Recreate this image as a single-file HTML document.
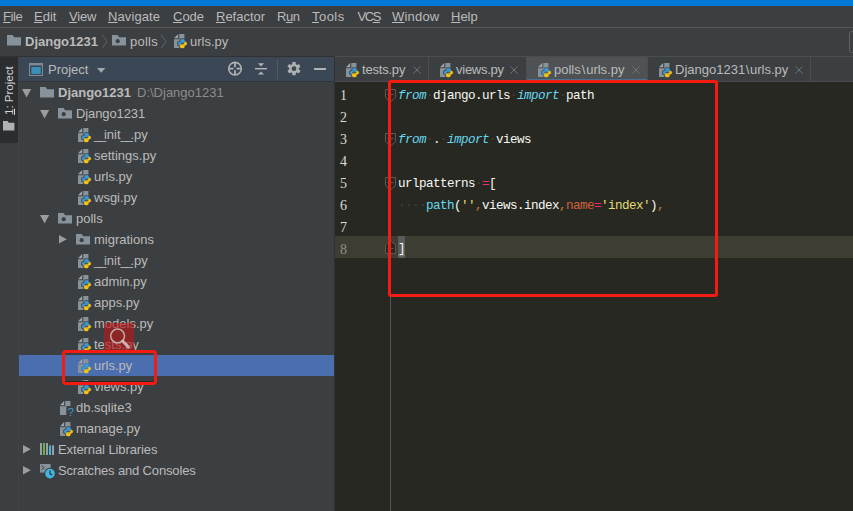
<!DOCTYPE html>
<html>
<head>
<meta charset="utf-8">
<title>PyCharm</title>
<style>
html,body{margin:0;padding:0;}
body{width:853px;height:511px;overflow:hidden;background:#3c3f41;position:relative;
  font-family:"Liberation Sans",sans-serif;font-size:13px;color:#bbbbbb;}
.abs{position:absolute;}
svg{display:block;overflow:visible;}
#titlebar{left:0;top:0;width:853px;height:6px;background:#0078d7;}
#menubar{left:0;top:6px;width:853px;height:21px;background:#3c3f41;}
#menuline{left:0;top:27px;width:853px;height:1px;background:#555758;}
.mi{position:absolute;top:9px;height:16px;line-height:16px;font-size:13px;color:#bbbbbb;white-space:nowrap;}
.mi u{text-decoration:underline;text-underline-offset:1px;}
#navbar{left:0;top:28px;width:853px;height:28px;background:#3c3f41;}
#navline{left:0;top:56px;width:335px;height:1px;background:#2f3133;}
#navline2{left:335px;top:56px;width:518px;height:1px;background:#4b4d4e;}
.nv{position:absolute;top:33px;height:18px;line-height:18px;font-size:13px;white-space:nowrap;color:#bbbbbb;}
#strip{left:0;top:57px;width:18px;height:454px;background:#3c3f41;}
#striptab{left:0;top:57px;width:18px;height:86px;background:#2b2d2e;}
#stripline{left:18px;top:57px;width:1px;height:454px;background:#404345;}
#striptx{left:9px;top:115px;transform-origin:0 0;transform:rotate(-90deg) translateY(-50%);font-size:11.5px;color:#d4d4d4;white-space:nowrap;line-height:14px;height:14px;}
#phead{left:19px;top:57px;width:315px;height:24px;background:#3b4754;}
#tree{left:19px;top:81px;width:315px;height:430px;background:#3c3f41;}
.tx{position:absolute;height:21px;line-height:21px;font-size:13px;white-space:nowrap;color:#bbbbbb;}
#sel{left:19px;top:355px;width:315px;height:21px;background:#4b6eaf;}
#psplit{left:334px;top:57px;width:1px;height:454px;background:#2f3133;}
#tabbar{left:335px;top:57px;width:518px;height:25px;background:#3c3f41;}
#tabline{left:335px;top:81px;width:518px;height:1px;background:#4a4c4c;}
#pheadline{left:19px;top:81px;width:315px;height:1px;background:#333638;}
#acttab{left:527px;top:57px;width:120px;height:24px;background:#4e5254;}
#actline{left:527px;top:79px;width:120px;height:2px;background:#4a88c7;opacity:.55;}
.tsep{position:absolute;top:57px;width:1px;height:24px;background:#4b4d4e;}
.tabtx{position:absolute;top:61px;height:18px;line-height:18px;font-size:13px;white-space:nowrap;color:#bbbbbb;}
#editor{left:335px;top:82px;width:518px;height:429px;background:#272822;}
#curline{left:335px;top:236px;width:518px;height:22px;background:#3e3d32;}
#gutline{left:390px;top:82px;width:1px;height:429px;background:#55564f;}
.ln{position:absolute;left:340px;width:20px;height:22px;line-height:22px;font-family:"Liberation Serif","Noto Serif CJK SC",serif;font-size:14px;color:#dcdcd6;}
.code{position:absolute;left:398px;height:22px;line-height:22px;font-family:"Liberation Mono",monospace;font-size:12.6px;letter-spacing:-0.56px;color:#f8f8f2;white-space:pre;}
.kw{color:#66d9ef;font-style:italic;}
.fn{color:#66d9ef;}
.op{color:#f92672;}
.st{color:#e6db74;}
.cm{color:#cc7832;}
.pa{color:#d4603d;}
.redbox{position:absolute;border:3px solid #f41b12;box-sizing:border-box;}
</style>
</head>
<body>
<div class="abs" id="titlebar"></div>
<div class="abs" id="menubar"></div>
<div class="abs" id="menuline"></div>
<span class="mi" style="left:3px;letter-spacing:-0.4px"><u>F</u>ile</span>
<span class="mi" style="left:34px;letter-spacing:0px"><u>E</u>dit</span>
<span class="mi" style="left:69px;letter-spacing:-0.2px"><u>V</u>iew</span>
<span class="mi" style="left:108px;letter-spacing:0.1px"><u>N</u>avigate</span>
<span class="mi" style="left:173px;letter-spacing:0px"><u>C</u>ode</span>
<span class="mi" style="left:216px;letter-spacing:0px"><u>R</u>efactor</span>
<span class="mi" style="left:277px;letter-spacing:-0.5px">R<u>u</u>n</span>
<span class="mi" style="left:312px;letter-spacing:0.45px"><u>T</u>ools</span>
<span class="mi" style="left:357.5px;letter-spacing:-1.4px">VC<u>S</u></span>
<span class="mi" style="left:392px;letter-spacing:0.2px"><u>W</u>indow</span>
<span class="mi" style="left:451px;letter-spacing:0px"><u>H</u>elp</span>
<div class="abs" id="navbar"></div>
<div class="abs" id="navline"></div><div class="abs" id="navline2"></div>
<svg class="abs" style="left:7px;top:35.3px" width="14" height="11" viewBox="0 0 14 11" ><path d="M0 0H5.6L7.2 2.2H14V10.6H0Z" fill="#87929a"/></svg><span class="nv" style="left:25px;font-weight:bold">Django1231</span>
<svg class="abs" style="left:101px;top:34px" width="7" height="15" viewBox="0 0 7 15" ><path d="M1 .5L6 7.5L1 14.5" stroke="#5f6365" stroke-width="1" fill="none"/></svg><svg class="abs" style="left:112px;top:35.3px" width="14" height="11" viewBox="0 0 14 11" ><path d="M0 0H5.6L7.2 2.2H14V10.6H0Z" fill="#87929a"/><circle cx="5.7" cy="6.2" r="2.1" fill="#3c3f41"/></svg><span class="nv" style="left:130px;letter-spacing:.25px">polls</span>
<svg class="abs" style="left:160px;top:34px" width="7" height="15" viewBox="0 0 7 15" ><path d="M1 .5L6 7.5L1 14.5" stroke="#5f6365" stroke-width="1" fill="none"/></svg><svg class="abs" style="left:174px;top:33.6px" width="15" height="16" viewBox="0 0 15 16" ><path d="M4.2 0L0 4.2H4.2Z" fill="#9ba6ad"/><path d="M5.3 0H10.4V14H0V5.3H5.3Z" fill="#87929a"/><g transform="translate(4.0 5.2) scale(0.88)"><path d="M5 0C3.5 0 2.7.6 2.7 1.5V2.7H5.1V3.1H1.6C.6 3.1 0 4 0 5C0 6 .6 6.9 1.6 6.9H2.5V5.7C2.5 4.8 3.2 4.1 4.1 4.1H6.4C7.1 4.1 7.6 3.6 7.6 2.9V1.5C7.6.6 6.6 0 5 0Z" fill="#3c3f41" stroke="#3c3f41" stroke-width="2.2"/><path d="M5 0C3.5 0 2.7.6 2.7 1.5V2.7H5.1V3.1H1.6C.6 3.1 0 4 0 5C0 6 .6 6.9 1.6 6.9H2.5V5.7C2.5 4.8 3.2 4.1 4.1 4.1H6.4C7.1 4.1 7.6 3.6 7.6 2.9V1.5C7.6.6 6.6 0 5 0Z" transform="rotate(180 5 5)" fill="#3c3f41" stroke="#3c3f41" stroke-width="2.2"/><path d="M5 0C3.5 0 2.7.6 2.7 1.5V2.7H5.1V3.1H1.6C.6 3.1 0 4 0 5C0 6 .6 6.9 1.6 6.9H2.5V5.7C2.5 4.8 3.2 4.1 4.1 4.1H6.4C7.1 4.1 7.6 3.6 7.6 2.9V1.5C7.6.6 6.6 0 5 0Z" fill="#3e9bd6" stroke="#3e9bd6" stroke-width=".5"/><path d="M5 0C3.5 0 2.7.6 2.7 1.5V2.7H5.1V3.1H1.6C.6 3.1 0 4 0 5C0 6 .6 6.9 1.6 6.9H2.5V5.7C2.5 4.8 3.2 4.1 4.1 4.1H6.4C7.1 4.1 7.6 3.6 7.6 2.9V1.5C7.6.6 6.6 0 5 0Z" transform="rotate(180 5 5)" fill="#f5c518" stroke="#f5c518" stroke-width=".5"/></g></svg><span class="nv" style="left:190px">urls.py</span>
<div class="abs" style="left:849px;top:31px;width:8px;height:20px;border:1px solid #5e6162;border-radius:3px;"></div>
<div class="abs" id="strip"></div>
<div class="abs" id="striptab"></div>
<div class="abs" id="stripline"></div>
<div class="abs" id="striptx"><u>1</u>: Project</div>
<svg class="abs" style="left:3px;top:120.5px" width="12" height="10" viewBox="0 0 12 10" ><path d="M0 0H4.6L5.8 1.8H11.4V9.4H0Z" fill="#afb1b3"/></svg><div class="abs" id="phead"></div>
<svg class="abs" style="left:29px;top:63px" width="14" height="13" viewBox="0 0 14 13" ><rect x=".5" y=".5" width="13" height="12" fill="none" stroke="#7f8b94" stroke-width="1"/><rect x="0" y="0" width="14" height="2.4" fill="#7f8b94"/><rect x="2.4" y="4" width="9.4" height="7" fill="#3a8fb7"/></svg><span class="tx" style="left:48px;top:59px">Project</span>
<svg class="abs" style="left:97px;top:68px" width="9" height="5" viewBox="0 0 9 5" ><path d="M0 0H8.4L4.2 4.8Z" fill="#a4a7aa"/></svg><svg class="abs" style="left:227px;top:61px" width="16" height="16" viewBox="0 0 16 16" ><circle cx="8" cy="7.7" r="6.3" fill="none" stroke="#afb1b3" stroke-width="1.6"/><path d="M8 1.4V6.2M8 9.2V14M1.7 7.7H6.5M9.5 7.7H14.3" stroke="#afb1b3" stroke-width="1.8"/></svg><svg class="abs" style="left:254px;top:62px" width="14" height="14" viewBox="0 0 14 14" ><path d="M1 6.7H13" stroke="#afb1b3" stroke-width="1.5"/><path d="M3.8 1.2H10.2L7 4.4Z" fill="#afb1b3"/><path d="M3.8 12.6H10.2L7 9.4Z" fill="#afb1b3"/></svg><div class="abs" style="left:277px;top:59px;width:1px;height:20px;background:#5b5855;"></div>
<svg class="abs" style="left:286px;top:61px" width="16" height="16" viewBox="0 0 16 16" ><g transform="translate(8 7.7)"><rect x="-1.7" y="-6.6" width="3.4" height="3.4" rx=".5" fill="#afb1b3" transform="rotate(0)"/><rect x="-1.7" y="-6.6" width="3.4" height="3.4" rx=".5" fill="#afb1b3" transform="rotate(60)"/><rect x="-1.7" y="-6.6" width="3.4" height="3.4" rx=".5" fill="#afb1b3" transform="rotate(120)"/><rect x="-1.7" y="-6.6" width="3.4" height="3.4" rx=".5" fill="#afb1b3" transform="rotate(180)"/><rect x="-1.7" y="-6.6" width="3.4" height="3.4" rx=".5" fill="#afb1b3" transform="rotate(240)"/><rect x="-1.7" y="-6.6" width="3.4" height="3.4" rx=".5" fill="#afb1b3" transform="rotate(300)"/><circle r="3.6" fill="none" stroke="#afb1b3" stroke-width="2.4"/></g></svg><div class="abs" style="left:314px;top:68px;width:12px;height:2px;background:#afb1b3;"></div>
<div class="abs" id="tree"></div>
<div class="abs" id="pheadline"></div>
<div class="abs" id="sel"></div>
<svg class="abs" style="left:22px;top:89px" width="10" height="9" viewBox="0 0 10 9" ><path d="M0 0H9.2L4.6 8.4Z" fill="#9c9c9c"/></svg><svg class="abs" style="left:40px;top:87.2px" width="14" height="11" viewBox="0 0 14 11" ><path d="M0 0H5.6L7.2 2.2H14V10.6H0Z" fill="#87929a"/></svg><span class="tx" style="left:58px;top:82px;font-weight:bold">Django1231</span>
<span class="tx" style="left:137px;top:82px;color:#8a8d8f">D:\Django1231</span>
<svg class="abs" style="left:40px;top:110px" width="10" height="9" viewBox="0 0 10 9" ><path d="M0 0H9.2L4.6 8.4Z" fill="#9c9c9c"/></svg><svg class="abs" style="left:58px;top:108.2px" width="14" height="11" viewBox="0 0 14 11" ><path d="M0 0H5.6L7.2 2.2H14V10.6H0Z" fill="#87929a"/><circle cx="5.7" cy="6.2" r="2.1" fill="#3c3f41"/></svg><span class="tx" style="left:76px;top:103px"><span style="letter-spacing:-.1px">Django1231</span></span>
<svg class="abs" style="left:78px;top:128px" width="15" height="16" viewBox="0 0 15 16" ><path d="M4.2 0L0 4.2H4.2Z" fill="#9ba6ad"/><path d="M5.3 0H10.4V14H0V5.3H5.3Z" fill="#87929a"/><g transform="translate(4.0 5.2) scale(0.88)"><path d="M5 0C3.5 0 2.7.6 2.7 1.5V2.7H5.1V3.1H1.6C.6 3.1 0 4 0 5C0 6 .6 6.9 1.6 6.9H2.5V5.7C2.5 4.8 3.2 4.1 4.1 4.1H6.4C7.1 4.1 7.6 3.6 7.6 2.9V1.5C7.6.6 6.6 0 5 0Z" fill="#3c3f41" stroke="#3c3f41" stroke-width="2.2"/><path d="M5 0C3.5 0 2.7.6 2.7 1.5V2.7H5.1V3.1H1.6C.6 3.1 0 4 0 5C0 6 .6 6.9 1.6 6.9H2.5V5.7C2.5 4.8 3.2 4.1 4.1 4.1H6.4C7.1 4.1 7.6 3.6 7.6 2.9V1.5C7.6.6 6.6 0 5 0Z" transform="rotate(180 5 5)" fill="#3c3f41" stroke="#3c3f41" stroke-width="2.2"/><path d="M5 0C3.5 0 2.7.6 2.7 1.5V2.7H5.1V3.1H1.6C.6 3.1 0 4 0 5C0 6 .6 6.9 1.6 6.9H2.5V5.7C2.5 4.8 3.2 4.1 4.1 4.1H6.4C7.1 4.1 7.6 3.6 7.6 2.9V1.5C7.6.6 6.6 0 5 0Z" fill="#3e9bd6" stroke="#3e9bd6" stroke-width=".5"/><path d="M5 0C3.5 0 2.7.6 2.7 1.5V2.7H5.1V3.1H1.6C.6 3.1 0 4 0 5C0 6 .6 6.9 1.6 6.9H2.5V5.7C2.5 4.8 3.2 4.1 4.1 4.1H6.4C7.1 4.1 7.6 3.6 7.6 2.9V1.5C7.6.6 6.6 0 5 0Z" transform="rotate(180 5 5)" fill="#f5c518" stroke="#f5c518" stroke-width=".5"/></g></svg><span class="tx" style="left:94px;top:124px"><span style="letter-spacing:-2.3px">__</span>init<span style="letter-spacing:-2.3px">__</span>.py</span>
<svg class="abs" style="left:78px;top:149px" width="15" height="16" viewBox="0 0 15 16" ><path d="M4.2 0L0 4.2H4.2Z" fill="#9ba6ad"/><path d="M5.3 0H10.4V14H0V5.3H5.3Z" fill="#87929a"/><g transform="translate(4.0 5.2) scale(0.88)"><path d="M5 0C3.5 0 2.7.6 2.7 1.5V2.7H5.1V3.1H1.6C.6 3.1 0 4 0 5C0 6 .6 6.9 1.6 6.9H2.5V5.7C2.5 4.8 3.2 4.1 4.1 4.1H6.4C7.1 4.1 7.6 3.6 7.6 2.9V1.5C7.6.6 6.6 0 5 0Z" fill="#3c3f41" stroke="#3c3f41" stroke-width="2.2"/><path d="M5 0C3.5 0 2.7.6 2.7 1.5V2.7H5.1V3.1H1.6C.6 3.1 0 4 0 5C0 6 .6 6.9 1.6 6.9H2.5V5.7C2.5 4.8 3.2 4.1 4.1 4.1H6.4C7.1 4.1 7.6 3.6 7.6 2.9V1.5C7.6.6 6.6 0 5 0Z" transform="rotate(180 5 5)" fill="#3c3f41" stroke="#3c3f41" stroke-width="2.2"/><path d="M5 0C3.5 0 2.7.6 2.7 1.5V2.7H5.1V3.1H1.6C.6 3.1 0 4 0 5C0 6 .6 6.9 1.6 6.9H2.5V5.7C2.5 4.8 3.2 4.1 4.1 4.1H6.4C7.1 4.1 7.6 3.6 7.6 2.9V1.5C7.6.6 6.6 0 5 0Z" fill="#3e9bd6" stroke="#3e9bd6" stroke-width=".5"/><path d="M5 0C3.5 0 2.7.6 2.7 1.5V2.7H5.1V3.1H1.6C.6 3.1 0 4 0 5C0 6 .6 6.9 1.6 6.9H2.5V5.7C2.5 4.8 3.2 4.1 4.1 4.1H6.4C7.1 4.1 7.6 3.6 7.6 2.9V1.5C7.6.6 6.6 0 5 0Z" transform="rotate(180 5 5)" fill="#f5c518" stroke="#f5c518" stroke-width=".5"/></g></svg><span class="tx" style="left:94px;top:145px">settings.py</span>
<svg class="abs" style="left:78px;top:170px" width="15" height="16" viewBox="0 0 15 16" ><path d="M4.2 0L0 4.2H4.2Z" fill="#9ba6ad"/><path d="M5.3 0H10.4V14H0V5.3H5.3Z" fill="#87929a"/><g transform="translate(4.0 5.2) scale(0.88)"><path d="M5 0C3.5 0 2.7.6 2.7 1.5V2.7H5.1V3.1H1.6C.6 3.1 0 4 0 5C0 6 .6 6.9 1.6 6.9H2.5V5.7C2.5 4.8 3.2 4.1 4.1 4.1H6.4C7.1 4.1 7.6 3.6 7.6 2.9V1.5C7.6.6 6.6 0 5 0Z" fill="#3c3f41" stroke="#3c3f41" stroke-width="2.2"/><path d="M5 0C3.5 0 2.7.6 2.7 1.5V2.7H5.1V3.1H1.6C.6 3.1 0 4 0 5C0 6 .6 6.9 1.6 6.9H2.5V5.7C2.5 4.8 3.2 4.1 4.1 4.1H6.4C7.1 4.1 7.6 3.6 7.6 2.9V1.5C7.6.6 6.6 0 5 0Z" transform="rotate(180 5 5)" fill="#3c3f41" stroke="#3c3f41" stroke-width="2.2"/><path d="M5 0C3.5 0 2.7.6 2.7 1.5V2.7H5.1V3.1H1.6C.6 3.1 0 4 0 5C0 6 .6 6.9 1.6 6.9H2.5V5.7C2.5 4.8 3.2 4.1 4.1 4.1H6.4C7.1 4.1 7.6 3.6 7.6 2.9V1.5C7.6.6 6.6 0 5 0Z" fill="#3e9bd6" stroke="#3e9bd6" stroke-width=".5"/><path d="M5 0C3.5 0 2.7.6 2.7 1.5V2.7H5.1V3.1H1.6C.6 3.1 0 4 0 5C0 6 .6 6.9 1.6 6.9H2.5V5.7C2.5 4.8 3.2 4.1 4.1 4.1H6.4C7.1 4.1 7.6 3.6 7.6 2.9V1.5C7.6.6 6.6 0 5 0Z" transform="rotate(180 5 5)" fill="#f5c518" stroke="#f5c518" stroke-width=".5"/></g></svg><span class="tx" style="left:94px;top:166px">urls.py</span>
<svg class="abs" style="left:78px;top:191px" width="15" height="16" viewBox="0 0 15 16" ><path d="M4.2 0L0 4.2H4.2Z" fill="#9ba6ad"/><path d="M5.3 0H10.4V14H0V5.3H5.3Z" fill="#87929a"/><g transform="translate(4.0 5.2) scale(0.88)"><path d="M5 0C3.5 0 2.7.6 2.7 1.5V2.7H5.1V3.1H1.6C.6 3.1 0 4 0 5C0 6 .6 6.9 1.6 6.9H2.5V5.7C2.5 4.8 3.2 4.1 4.1 4.1H6.4C7.1 4.1 7.6 3.6 7.6 2.9V1.5C7.6.6 6.6 0 5 0Z" fill="#3c3f41" stroke="#3c3f41" stroke-width="2.2"/><path d="M5 0C3.5 0 2.7.6 2.7 1.5V2.7H5.1V3.1H1.6C.6 3.1 0 4 0 5C0 6 .6 6.9 1.6 6.9H2.5V5.7C2.5 4.8 3.2 4.1 4.1 4.1H6.4C7.1 4.1 7.6 3.6 7.6 2.9V1.5C7.6.6 6.6 0 5 0Z" transform="rotate(180 5 5)" fill="#3c3f41" stroke="#3c3f41" stroke-width="2.2"/><path d="M5 0C3.5 0 2.7.6 2.7 1.5V2.7H5.1V3.1H1.6C.6 3.1 0 4 0 5C0 6 .6 6.9 1.6 6.9H2.5V5.7C2.5 4.8 3.2 4.1 4.1 4.1H6.4C7.1 4.1 7.6 3.6 7.6 2.9V1.5C7.6.6 6.6 0 5 0Z" fill="#3e9bd6" stroke="#3e9bd6" stroke-width=".5"/><path d="M5 0C3.5 0 2.7.6 2.7 1.5V2.7H5.1V3.1H1.6C.6 3.1 0 4 0 5C0 6 .6 6.9 1.6 6.9H2.5V5.7C2.5 4.8 3.2 4.1 4.1 4.1H6.4C7.1 4.1 7.6 3.6 7.6 2.9V1.5C7.6.6 6.6 0 5 0Z" transform="rotate(180 5 5)" fill="#f5c518" stroke="#f5c518" stroke-width=".5"/></g></svg><span class="tx" style="left:94px;top:187px">wsgi.py</span>
<svg class="abs" style="left:40px;top:215px" width="10" height="9" viewBox="0 0 10 9" ><path d="M0 0H9.2L4.6 8.4Z" fill="#9c9c9c"/></svg><svg class="abs" style="left:58px;top:213.2px" width="14" height="11" viewBox="0 0 14 11" ><path d="M0 0H5.6L7.2 2.2H14V10.6H0Z" fill="#87929a"/><circle cx="5.7" cy="6.2" r="2.1" fill="#3c3f41"/></svg><span class="tx" style="left:76px;top:208px">polls</span>
<svg class="abs" style="left:59px;top:235px" width="9" height="10" viewBox="0 0 9 10" ><path d="M0 0L7.8 4.3L0 8.6Z" fill="#9c9c9c"/></svg><svg class="abs" style="left:76px;top:234.2px" width="14" height="11" viewBox="0 0 14 11" ><path d="M0 0H5.6L7.2 2.2H14V10.6H0Z" fill="#87929a"/><circle cx="5.7" cy="6.2" r="2.1" fill="#3c3f41"/></svg><span class="tx" style="left:94px;top:229px">migrations</span>
<svg class="abs" style="left:78px;top:254px" width="15" height="16" viewBox="0 0 15 16" ><path d="M4.2 0L0 4.2H4.2Z" fill="#9ba6ad"/><path d="M5.3 0H10.4V14H0V5.3H5.3Z" fill="#87929a"/><g transform="translate(4.0 5.2) scale(0.88)"><path d="M5 0C3.5 0 2.7.6 2.7 1.5V2.7H5.1V3.1H1.6C.6 3.1 0 4 0 5C0 6 .6 6.9 1.6 6.9H2.5V5.7C2.5 4.8 3.2 4.1 4.1 4.1H6.4C7.1 4.1 7.6 3.6 7.6 2.9V1.5C7.6.6 6.6 0 5 0Z" fill="#3c3f41" stroke="#3c3f41" stroke-width="2.2"/><path d="M5 0C3.5 0 2.7.6 2.7 1.5V2.7H5.1V3.1H1.6C.6 3.1 0 4 0 5C0 6 .6 6.9 1.6 6.9H2.5V5.7C2.5 4.8 3.2 4.1 4.1 4.1H6.4C7.1 4.1 7.6 3.6 7.6 2.9V1.5C7.6.6 6.6 0 5 0Z" transform="rotate(180 5 5)" fill="#3c3f41" stroke="#3c3f41" stroke-width="2.2"/><path d="M5 0C3.5 0 2.7.6 2.7 1.5V2.7H5.1V3.1H1.6C.6 3.1 0 4 0 5C0 6 .6 6.9 1.6 6.9H2.5V5.7C2.5 4.8 3.2 4.1 4.1 4.1H6.4C7.1 4.1 7.6 3.6 7.6 2.9V1.5C7.6.6 6.6 0 5 0Z" fill="#3e9bd6" stroke="#3e9bd6" stroke-width=".5"/><path d="M5 0C3.5 0 2.7.6 2.7 1.5V2.7H5.1V3.1H1.6C.6 3.1 0 4 0 5C0 6 .6 6.9 1.6 6.9H2.5V5.7C2.5 4.8 3.2 4.1 4.1 4.1H6.4C7.1 4.1 7.6 3.6 7.6 2.9V1.5C7.6.6 6.6 0 5 0Z" transform="rotate(180 5 5)" fill="#f5c518" stroke="#f5c518" stroke-width=".5"/></g></svg><span class="tx" style="left:94px;top:250px"><span style="letter-spacing:-2.3px">__</span>init<span style="letter-spacing:-2.3px">__</span>.py</span>
<svg class="abs" style="left:78px;top:275px" width="15" height="16" viewBox="0 0 15 16" ><path d="M4.2 0L0 4.2H4.2Z" fill="#9ba6ad"/><path d="M5.3 0H10.4V14H0V5.3H5.3Z" fill="#87929a"/><g transform="translate(4.0 5.2) scale(0.88)"><path d="M5 0C3.5 0 2.7.6 2.7 1.5V2.7H5.1V3.1H1.6C.6 3.1 0 4 0 5C0 6 .6 6.9 1.6 6.9H2.5V5.7C2.5 4.8 3.2 4.1 4.1 4.1H6.4C7.1 4.1 7.6 3.6 7.6 2.9V1.5C7.6.6 6.6 0 5 0Z" fill="#3c3f41" stroke="#3c3f41" stroke-width="2.2"/><path d="M5 0C3.5 0 2.7.6 2.7 1.5V2.7H5.1V3.1H1.6C.6 3.1 0 4 0 5C0 6 .6 6.9 1.6 6.9H2.5V5.7C2.5 4.8 3.2 4.1 4.1 4.1H6.4C7.1 4.1 7.6 3.6 7.6 2.9V1.5C7.6.6 6.6 0 5 0Z" transform="rotate(180 5 5)" fill="#3c3f41" stroke="#3c3f41" stroke-width="2.2"/><path d="M5 0C3.5 0 2.7.6 2.7 1.5V2.7H5.1V3.1H1.6C.6 3.1 0 4 0 5C0 6 .6 6.9 1.6 6.9H2.5V5.7C2.5 4.8 3.2 4.1 4.1 4.1H6.4C7.1 4.1 7.6 3.6 7.6 2.9V1.5C7.6.6 6.6 0 5 0Z" fill="#3e9bd6" stroke="#3e9bd6" stroke-width=".5"/><path d="M5 0C3.5 0 2.7.6 2.7 1.5V2.7H5.1V3.1H1.6C.6 3.1 0 4 0 5C0 6 .6 6.9 1.6 6.9H2.5V5.7C2.5 4.8 3.2 4.1 4.1 4.1H6.4C7.1 4.1 7.6 3.6 7.6 2.9V1.5C7.6.6 6.6 0 5 0Z" transform="rotate(180 5 5)" fill="#f5c518" stroke="#f5c518" stroke-width=".5"/></g></svg><span class="tx" style="left:94px;top:271px">admin.py</span>
<svg class="abs" style="left:78px;top:296px" width="15" height="16" viewBox="0 0 15 16" ><path d="M4.2 0L0 4.2H4.2Z" fill="#9ba6ad"/><path d="M5.3 0H10.4V14H0V5.3H5.3Z" fill="#87929a"/><g transform="translate(4.0 5.2) scale(0.88)"><path d="M5 0C3.5 0 2.7.6 2.7 1.5V2.7H5.1V3.1H1.6C.6 3.1 0 4 0 5C0 6 .6 6.9 1.6 6.9H2.5V5.7C2.5 4.8 3.2 4.1 4.1 4.1H6.4C7.1 4.1 7.6 3.6 7.6 2.9V1.5C7.6.6 6.6 0 5 0Z" fill="#3c3f41" stroke="#3c3f41" stroke-width="2.2"/><path d="M5 0C3.5 0 2.7.6 2.7 1.5V2.7H5.1V3.1H1.6C.6 3.1 0 4 0 5C0 6 .6 6.9 1.6 6.9H2.5V5.7C2.5 4.8 3.2 4.1 4.1 4.1H6.4C7.1 4.1 7.6 3.6 7.6 2.9V1.5C7.6.6 6.6 0 5 0Z" transform="rotate(180 5 5)" fill="#3c3f41" stroke="#3c3f41" stroke-width="2.2"/><path d="M5 0C3.5 0 2.7.6 2.7 1.5V2.7H5.1V3.1H1.6C.6 3.1 0 4 0 5C0 6 .6 6.9 1.6 6.9H2.5V5.7C2.5 4.8 3.2 4.1 4.1 4.1H6.4C7.1 4.1 7.6 3.6 7.6 2.9V1.5C7.6.6 6.6 0 5 0Z" fill="#3e9bd6" stroke="#3e9bd6" stroke-width=".5"/><path d="M5 0C3.5 0 2.7.6 2.7 1.5V2.7H5.1V3.1H1.6C.6 3.1 0 4 0 5C0 6 .6 6.9 1.6 6.9H2.5V5.7C2.5 4.8 3.2 4.1 4.1 4.1H6.4C7.1 4.1 7.6 3.6 7.6 2.9V1.5C7.6.6 6.6 0 5 0Z" transform="rotate(180 5 5)" fill="#f5c518" stroke="#f5c518" stroke-width=".5"/></g></svg><span class="tx" style="left:94px;top:292px">apps.py</span>
<svg class="abs" style="left:78px;top:317px" width="15" height="16" viewBox="0 0 15 16" ><path d="M4.2 0L0 4.2H4.2Z" fill="#9ba6ad"/><path d="M5.3 0H10.4V14H0V5.3H5.3Z" fill="#87929a"/><g transform="translate(4.0 5.2) scale(0.88)"><path d="M5 0C3.5 0 2.7.6 2.7 1.5V2.7H5.1V3.1H1.6C.6 3.1 0 4 0 5C0 6 .6 6.9 1.6 6.9H2.5V5.7C2.5 4.8 3.2 4.1 4.1 4.1H6.4C7.1 4.1 7.6 3.6 7.6 2.9V1.5C7.6.6 6.6 0 5 0Z" fill="#3c3f41" stroke="#3c3f41" stroke-width="2.2"/><path d="M5 0C3.5 0 2.7.6 2.7 1.5V2.7H5.1V3.1H1.6C.6 3.1 0 4 0 5C0 6 .6 6.9 1.6 6.9H2.5V5.7C2.5 4.8 3.2 4.1 4.1 4.1H6.4C7.1 4.1 7.6 3.6 7.6 2.9V1.5C7.6.6 6.6 0 5 0Z" transform="rotate(180 5 5)" fill="#3c3f41" stroke="#3c3f41" stroke-width="2.2"/><path d="M5 0C3.5 0 2.7.6 2.7 1.5V2.7H5.1V3.1H1.6C.6 3.1 0 4 0 5C0 6 .6 6.9 1.6 6.9H2.5V5.7C2.5 4.8 3.2 4.1 4.1 4.1H6.4C7.1 4.1 7.6 3.6 7.6 2.9V1.5C7.6.6 6.6 0 5 0Z" fill="#3e9bd6" stroke="#3e9bd6" stroke-width=".5"/><path d="M5 0C3.5 0 2.7.6 2.7 1.5V2.7H5.1V3.1H1.6C.6 3.1 0 4 0 5C0 6 .6 6.9 1.6 6.9H2.5V5.7C2.5 4.8 3.2 4.1 4.1 4.1H6.4C7.1 4.1 7.6 3.6 7.6 2.9V1.5C7.6.6 6.6 0 5 0Z" transform="rotate(180 5 5)" fill="#f5c518" stroke="#f5c518" stroke-width=".5"/></g></svg><span class="tx" style="left:94px;top:313px">models.py</span>
<svg class="abs" style="left:78px;top:338px" width="15" height="16" viewBox="0 0 15 16" ><path d="M4.2 0L0 4.2H4.2Z" fill="#9ba6ad"/><path d="M5.3 0H10.4V14H0V5.3H5.3Z" fill="#87929a"/><g transform="translate(4.0 5.2) scale(0.88)"><path d="M5 0C3.5 0 2.7.6 2.7 1.5V2.7H5.1V3.1H1.6C.6 3.1 0 4 0 5C0 6 .6 6.9 1.6 6.9H2.5V5.7C2.5 4.8 3.2 4.1 4.1 4.1H6.4C7.1 4.1 7.6 3.6 7.6 2.9V1.5C7.6.6 6.6 0 5 0Z" fill="#3c3f41" stroke="#3c3f41" stroke-width="2.2"/><path d="M5 0C3.5 0 2.7.6 2.7 1.5V2.7H5.1V3.1H1.6C.6 3.1 0 4 0 5C0 6 .6 6.9 1.6 6.9H2.5V5.7C2.5 4.8 3.2 4.1 4.1 4.1H6.4C7.1 4.1 7.6 3.6 7.6 2.9V1.5C7.6.6 6.6 0 5 0Z" transform="rotate(180 5 5)" fill="#3c3f41" stroke="#3c3f41" stroke-width="2.2"/><path d="M5 0C3.5 0 2.7.6 2.7 1.5V2.7H5.1V3.1H1.6C.6 3.1 0 4 0 5C0 6 .6 6.9 1.6 6.9H2.5V5.7C2.5 4.8 3.2 4.1 4.1 4.1H6.4C7.1 4.1 7.6 3.6 7.6 2.9V1.5C7.6.6 6.6 0 5 0Z" fill="#3e9bd6" stroke="#3e9bd6" stroke-width=".5"/><path d="M5 0C3.5 0 2.7.6 2.7 1.5V2.7H5.1V3.1H1.6C.6 3.1 0 4 0 5C0 6 .6 6.9 1.6 6.9H2.5V5.7C2.5 4.8 3.2 4.1 4.1 4.1H6.4C7.1 4.1 7.6 3.6 7.6 2.9V1.5C7.6.6 6.6 0 5 0Z" transform="rotate(180 5 5)" fill="#f5c518" stroke="#f5c518" stroke-width=".5"/></g></svg><span class="tx" style="left:94px;top:334px">tests.py</span>
<svg class="abs" style="left:78px;top:359px" width="15" height="16" viewBox="0 0 15 16" ><path d="M4.2 0L0 4.2H4.2Z" fill="#9ba6ad"/><path d="M5.3 0H10.4V14H0V5.3H5.3Z" fill="#87929a"/><g transform="translate(4.0 5.2) scale(0.88)"><path d="M5 0C3.5 0 2.7.6 2.7 1.5V2.7H5.1V3.1H1.6C.6 3.1 0 4 0 5C0 6 .6 6.9 1.6 6.9H2.5V5.7C2.5 4.8 3.2 4.1 4.1 4.1H6.4C7.1 4.1 7.6 3.6 7.6 2.9V1.5C7.6.6 6.6 0 5 0Z" fill="#4b6eaf" stroke="#4b6eaf" stroke-width="2.2"/><path d="M5 0C3.5 0 2.7.6 2.7 1.5V2.7H5.1V3.1H1.6C.6 3.1 0 4 0 5C0 6 .6 6.9 1.6 6.9H2.5V5.7C2.5 4.8 3.2 4.1 4.1 4.1H6.4C7.1 4.1 7.6 3.6 7.6 2.9V1.5C7.6.6 6.6 0 5 0Z" transform="rotate(180 5 5)" fill="#4b6eaf" stroke="#4b6eaf" stroke-width="2.2"/><path d="M5 0C3.5 0 2.7.6 2.7 1.5V2.7H5.1V3.1H1.6C.6 3.1 0 4 0 5C0 6 .6 6.9 1.6 6.9H2.5V5.7C2.5 4.8 3.2 4.1 4.1 4.1H6.4C7.1 4.1 7.6 3.6 7.6 2.9V1.5C7.6.6 6.6 0 5 0Z" fill="#3e9bd6" stroke="#3e9bd6" stroke-width=".5"/><path d="M5 0C3.5 0 2.7.6 2.7 1.5V2.7H5.1V3.1H1.6C.6 3.1 0 4 0 5C0 6 .6 6.9 1.6 6.9H2.5V5.7C2.5 4.8 3.2 4.1 4.1 4.1H6.4C7.1 4.1 7.6 3.6 7.6 2.9V1.5C7.6.6 6.6 0 5 0Z" transform="rotate(180 5 5)" fill="#f5c518" stroke="#f5c518" stroke-width=".5"/></g></svg><span class="tx" style="left:94px;top:355px">urls.py</span>
<svg class="abs" style="left:78px;top:380px" width="15" height="16" viewBox="0 0 15 16" ><path d="M4.2 0L0 4.2H4.2Z" fill="#9ba6ad"/><path d="M5.3 0H10.4V14H0V5.3H5.3Z" fill="#87929a"/><g transform="translate(4.0 5.2) scale(0.88)"><path d="M5 0C3.5 0 2.7.6 2.7 1.5V2.7H5.1V3.1H1.6C.6 3.1 0 4 0 5C0 6 .6 6.9 1.6 6.9H2.5V5.7C2.5 4.8 3.2 4.1 4.1 4.1H6.4C7.1 4.1 7.6 3.6 7.6 2.9V1.5C7.6.6 6.6 0 5 0Z" fill="#3c3f41" stroke="#3c3f41" stroke-width="2.2"/><path d="M5 0C3.5 0 2.7.6 2.7 1.5V2.7H5.1V3.1H1.6C.6 3.1 0 4 0 5C0 6 .6 6.9 1.6 6.9H2.5V5.7C2.5 4.8 3.2 4.1 4.1 4.1H6.4C7.1 4.1 7.6 3.6 7.6 2.9V1.5C7.6.6 6.6 0 5 0Z" transform="rotate(180 5 5)" fill="#3c3f41" stroke="#3c3f41" stroke-width="2.2"/><path d="M5 0C3.5 0 2.7.6 2.7 1.5V2.7H5.1V3.1H1.6C.6 3.1 0 4 0 5C0 6 .6 6.9 1.6 6.9H2.5V5.7C2.5 4.8 3.2 4.1 4.1 4.1H6.4C7.1 4.1 7.6 3.6 7.6 2.9V1.5C7.6.6 6.6 0 5 0Z" fill="#3e9bd6" stroke="#3e9bd6" stroke-width=".5"/><path d="M5 0C3.5 0 2.7.6 2.7 1.5V2.7H5.1V3.1H1.6C.6 3.1 0 4 0 5C0 6 .6 6.9 1.6 6.9H2.5V5.7C2.5 4.8 3.2 4.1 4.1 4.1H6.4C7.1 4.1 7.6 3.6 7.6 2.9V1.5C7.6.6 6.6 0 5 0Z" transform="rotate(180 5 5)" fill="#f5c518" stroke="#f5c518" stroke-width=".5"/></g></svg><span class="tx" style="left:94px;top:376px">views.py</span>
<svg class="abs" style="left:60px;top:401px" width="15" height="17" viewBox="0 0 15 17" ><path d="M4.2 0L0 4.2H4.2Z" fill="#9ba6ad"/><path d="M5.3 0H10.4V14H0V5.3H5.3Z" fill="#87929a"/><rect x="6.3" y="5" width="8" height="11" fill="#3c3f41"/><text x="7.4" y="14.6" font-family="Liberation Sans, sans-serif" font-size="11.5" fill="#3e9bd6">?</text></svg><span class="tx" style="left:76px;top:397px">db.sqlite3</span>
<svg class="abs" style="left:60px;top:422px" width="15" height="16" viewBox="0 0 15 16" ><path d="M4.2 0L0 4.2H4.2Z" fill="#9ba6ad"/><path d="M5.3 0H10.4V14H0V5.3H5.3Z" fill="#87929a"/><g transform="translate(4.0 5.2) scale(0.88)"><path d="M5 0C3.5 0 2.7.6 2.7 1.5V2.7H5.1V3.1H1.6C.6 3.1 0 4 0 5C0 6 .6 6.9 1.6 6.9H2.5V5.7C2.5 4.8 3.2 4.1 4.1 4.1H6.4C7.1 4.1 7.6 3.6 7.6 2.9V1.5C7.6.6 6.6 0 5 0Z" fill="#3c3f41" stroke="#3c3f41" stroke-width="2.2"/><path d="M5 0C3.5 0 2.7.6 2.7 1.5V2.7H5.1V3.1H1.6C.6 3.1 0 4 0 5C0 6 .6 6.9 1.6 6.9H2.5V5.7C2.5 4.8 3.2 4.1 4.1 4.1H6.4C7.1 4.1 7.6 3.6 7.6 2.9V1.5C7.6.6 6.6 0 5 0Z" transform="rotate(180 5 5)" fill="#3c3f41" stroke="#3c3f41" stroke-width="2.2"/><path d="M5 0C3.5 0 2.7.6 2.7 1.5V2.7H5.1V3.1H1.6C.6 3.1 0 4 0 5C0 6 .6 6.9 1.6 6.9H2.5V5.7C2.5 4.8 3.2 4.1 4.1 4.1H6.4C7.1 4.1 7.6 3.6 7.6 2.9V1.5C7.6.6 6.6 0 5 0Z" fill="#3e9bd6" stroke="#3e9bd6" stroke-width=".5"/><path d="M5 0C3.5 0 2.7.6 2.7 1.5V2.7H5.1V3.1H1.6C.6 3.1 0 4 0 5C0 6 .6 6.9 1.6 6.9H2.5V5.7C2.5 4.8 3.2 4.1 4.1 4.1H6.4C7.1 4.1 7.6 3.6 7.6 2.9V1.5C7.6.6 6.6 0 5 0Z" transform="rotate(180 5 5)" fill="#f5c518" stroke="#f5c518" stroke-width=".5"/></g></svg><span class="tx" style="left:76px;top:418px">manage.py</span>
<svg class="abs" style="left:23px;top:445px" width="9" height="10" viewBox="0 0 9 10" ><path d="M0 0L7.8 4.3L0 8.6Z" fill="#9c9c9c"/></svg><svg class="abs" style="left:40px;top:443px" width="14" height="13" viewBox="0 0 14 13" ><rect x="0" y="0" width="2" height="12" fill="#9aa0a4"/><rect x="3" y="0" width="2" height="12" fill="#62b543"/><rect x="6" y="0" width="2" height="12" fill="#9aa0a4"/><rect x="9" y="2.4" width="2" height="9.6" fill="#40b6e0"/><rect x="12" y="2.4" width="2" height="9.6" fill="#9aa0a4"/></svg><span class="tx" style="left:58px;top:439px"><span style="letter-spacing:-.1px">External Libraries</span></span>
<svg class="abs" style="left:23px;top:466px" width="9" height="10" viewBox="0 0 9 10" ><path d="M0 0L7.8 4.3L0 8.6Z" fill="#9c9c9c"/></svg><svg class="abs" style="left:40px;top:464px" width="16" height="16" viewBox="0 0 16 16" ><rect x="0" y="0" width="10.6" height="8.6" fill="#87929a"/><path d="M1.6 1.6L4.2 3.6L1.6 5.6" stroke="#3c3f41" stroke-width="1" fill="none"/><circle cx="10" cy="9.6" r="5.8" fill="#3c3f41"/><circle cx="10" cy="9.6" r="4.8" fill="#40b6e0"/><path d="M10 6.6V9.8L12.2 11" stroke="#2b2b2b" stroke-width="1.1" fill="none"/></svg><span class="tx" style="left:58px;top:460px"><span style="letter-spacing:-.15px">Scratches and Consoles</span></span>
<div class="abs" style="left:104px;top:323px;width:30px;height:27px;background:rgba(190,22,22,.62);"></div>
<svg class="abs" style="left:108.4px;top:327px" width="24" height="24" viewBox="0 0 24 24" ><circle cx="9.6" cy="9" r="6.9" fill="none" stroke="#cdbcbc" stroke-width="1.5" opacity=".85"/><path d="M14.8 14.2L20.3 19.9" stroke="#d8c6c6" stroke-width="3" stroke-linecap="round" opacity=".85"/></svg><div class="abs" style="left:65px;top:380.6px;width:89px;height:1.2px;background:#262828;"></div>
<div class="redbox" style="left:62px;top:350px;width:95px;height:34.6px;border-radius:4px;"></div>
<div class="abs" id="psplit"></div>
<div class="abs" id="tabbar"></div>
<div class="abs" id="acttab"></div>
<div class="abs" id="actline"></div>
<div class="abs" id="tabline"></div>
<svg class="abs" style="left:346px;top:62.5px" width="15" height="16" viewBox="0 0 15 16" ><path d="M4.2 0L0 4.2H4.2Z" fill="#9ba6ad"/><path d="M5.3 0H10.4V14H0V5.3H5.3Z" fill="#87929a"/><g transform="translate(4.0 5.2) scale(0.88)"><path d="M5 0C3.5 0 2.7.6 2.7 1.5V2.7H5.1V3.1H1.6C.6 3.1 0 4 0 5C0 6 .6 6.9 1.6 6.9H2.5V5.7C2.5 4.8 3.2 4.1 4.1 4.1H6.4C7.1 4.1 7.6 3.6 7.6 2.9V1.5C7.6.6 6.6 0 5 0Z" fill="#3c3f41" stroke="#3c3f41" stroke-width="2.2"/><path d="M5 0C3.5 0 2.7.6 2.7 1.5V2.7H5.1V3.1H1.6C.6 3.1 0 4 0 5C0 6 .6 6.9 1.6 6.9H2.5V5.7C2.5 4.8 3.2 4.1 4.1 4.1H6.4C7.1 4.1 7.6 3.6 7.6 2.9V1.5C7.6.6 6.6 0 5 0Z" transform="rotate(180 5 5)" fill="#3c3f41" stroke="#3c3f41" stroke-width="2.2"/><path d="M5 0C3.5 0 2.7.6 2.7 1.5V2.7H5.1V3.1H1.6C.6 3.1 0 4 0 5C0 6 .6 6.9 1.6 6.9H2.5V5.7C2.5 4.8 3.2 4.1 4.1 4.1H6.4C7.1 4.1 7.6 3.6 7.6 2.9V1.5C7.6.6 6.6 0 5 0Z" fill="#3e9bd6" stroke="#3e9bd6" stroke-width=".5"/><path d="M5 0C3.5 0 2.7.6 2.7 1.5V2.7H5.1V3.1H1.6C.6 3.1 0 4 0 5C0 6 .6 6.9 1.6 6.9H2.5V5.7C2.5 4.8 3.2 4.1 4.1 4.1H6.4C7.1 4.1 7.6 3.6 7.6 2.9V1.5C7.6.6 6.6 0 5 0Z" transform="rotate(180 5 5)" fill="#f5c518" stroke="#f5c518" stroke-width=".5"/></g></svg><span class="tabtx" style="left:362px"><span style="letter-spacing:-.2px">tests.py</span></span>
<svg class="abs" style="left:412.5px;top:66px" width="8" height="8" viewBox="0 0 8 8" ><path d="M.5 .5L7.5 7.5M7.5 .5L.5 7.5" stroke="#6f7376" stroke-width="1" fill="none"/></svg><svg class="abs" style="left:440px;top:62.5px" width="15" height="16" viewBox="0 0 15 16" ><path d="M4.2 0L0 4.2H4.2Z" fill="#9ba6ad"/><path d="M5.3 0H10.4V14H0V5.3H5.3Z" fill="#87929a"/><g transform="translate(4.0 5.2) scale(0.88)"><path d="M5 0C3.5 0 2.7.6 2.7 1.5V2.7H5.1V3.1H1.6C.6 3.1 0 4 0 5C0 6 .6 6.9 1.6 6.9H2.5V5.7C2.5 4.8 3.2 4.1 4.1 4.1H6.4C7.1 4.1 7.6 3.6 7.6 2.9V1.5C7.6.6 6.6 0 5 0Z" fill="#3c3f41" stroke="#3c3f41" stroke-width="2.2"/><path d="M5 0C3.5 0 2.7.6 2.7 1.5V2.7H5.1V3.1H1.6C.6 3.1 0 4 0 5C0 6 .6 6.9 1.6 6.9H2.5V5.7C2.5 4.8 3.2 4.1 4.1 4.1H6.4C7.1 4.1 7.6 3.6 7.6 2.9V1.5C7.6.6 6.6 0 5 0Z" transform="rotate(180 5 5)" fill="#3c3f41" stroke="#3c3f41" stroke-width="2.2"/><path d="M5 0C3.5 0 2.7.6 2.7 1.5V2.7H5.1V3.1H1.6C.6 3.1 0 4 0 5C0 6 .6 6.9 1.6 6.9H2.5V5.7C2.5 4.8 3.2 4.1 4.1 4.1H6.4C7.1 4.1 7.6 3.6 7.6 2.9V1.5C7.6.6 6.6 0 5 0Z" fill="#3e9bd6" stroke="#3e9bd6" stroke-width=".5"/><path d="M5 0C3.5 0 2.7.6 2.7 1.5V2.7H5.1V3.1H1.6C.6 3.1 0 4 0 5C0 6 .6 6.9 1.6 6.9H2.5V5.7C2.5 4.8 3.2 4.1 4.1 4.1H6.4C7.1 4.1 7.6 3.6 7.6 2.9V1.5C7.6.6 6.6 0 5 0Z" transform="rotate(180 5 5)" fill="#f5c518" stroke="#f5c518" stroke-width=".5"/></g></svg><span class="tabtx" style="left:456px"><span style="letter-spacing:-.25px">views.py</span></span>
<svg class="abs" style="left:509.5px;top:66px" width="8" height="8" viewBox="0 0 8 8" ><path d="M.5 .5L7.5 7.5M7.5 .5L.5 7.5" stroke="#6f7376" stroke-width="1" fill="none"/></svg><svg class="abs" style="left:538px;top:62.5px" width="15" height="16" viewBox="0 0 15 16" ><path d="M4.2 0L0 4.2H4.2Z" fill="#9ba6ad"/><path d="M5.3 0H10.4V14H0V5.3H5.3Z" fill="#87929a"/><g transform="translate(4.0 5.2) scale(0.88)"><path d="M5 0C3.5 0 2.7.6 2.7 1.5V2.7H5.1V3.1H1.6C.6 3.1 0 4 0 5C0 6 .6 6.9 1.6 6.9H2.5V5.7C2.5 4.8 3.2 4.1 4.1 4.1H6.4C7.1 4.1 7.6 3.6 7.6 2.9V1.5C7.6.6 6.6 0 5 0Z" fill="#4e5254" stroke="#4e5254" stroke-width="2.2"/><path d="M5 0C3.5 0 2.7.6 2.7 1.5V2.7H5.1V3.1H1.6C.6 3.1 0 4 0 5C0 6 .6 6.9 1.6 6.9H2.5V5.7C2.5 4.8 3.2 4.1 4.1 4.1H6.4C7.1 4.1 7.6 3.6 7.6 2.9V1.5C7.6.6 6.6 0 5 0Z" transform="rotate(180 5 5)" fill="#4e5254" stroke="#4e5254" stroke-width="2.2"/><path d="M5 0C3.5 0 2.7.6 2.7 1.5V2.7H5.1V3.1H1.6C.6 3.1 0 4 0 5C0 6 .6 6.9 1.6 6.9H2.5V5.7C2.5 4.8 3.2 4.1 4.1 4.1H6.4C7.1 4.1 7.6 3.6 7.6 2.9V1.5C7.6.6 6.6 0 5 0Z" fill="#3e9bd6" stroke="#3e9bd6" stroke-width=".5"/><path d="M5 0C3.5 0 2.7.6 2.7 1.5V2.7H5.1V3.1H1.6C.6 3.1 0 4 0 5C0 6 .6 6.9 1.6 6.9H2.5V5.7C2.5 4.8 3.2 4.1 4.1 4.1H6.4C7.1 4.1 7.6 3.6 7.6 2.9V1.5C7.6.6 6.6 0 5 0Z" transform="rotate(180 5 5)" fill="#f5c518" stroke="#f5c518" stroke-width=".5"/></g></svg><span class="tabtx" style="left:554px">polls<span style="margin:0 .9px">\</span>urls.py</span>
<svg class="abs" style="left:631.5px;top:66px" width="8" height="8" viewBox="0 0 8 8" ><path d="M.5 .5L7.5 7.5M7.5 .5L.5 7.5" stroke="#6f7376" stroke-width="1" fill="none"/></svg><svg class="abs" style="left:659px;top:62.5px" width="15" height="16" viewBox="0 0 15 16" ><path d="M4.2 0L0 4.2H4.2Z" fill="#9ba6ad"/><path d="M5.3 0H10.4V14H0V5.3H5.3Z" fill="#87929a"/><g transform="translate(4.0 5.2) scale(0.88)"><path d="M5 0C3.5 0 2.7.6 2.7 1.5V2.7H5.1V3.1H1.6C.6 3.1 0 4 0 5C0 6 .6 6.9 1.6 6.9H2.5V5.7C2.5 4.8 3.2 4.1 4.1 4.1H6.4C7.1 4.1 7.6 3.6 7.6 2.9V1.5C7.6.6 6.6 0 5 0Z" fill="#3c3f41" stroke="#3c3f41" stroke-width="2.2"/><path d="M5 0C3.5 0 2.7.6 2.7 1.5V2.7H5.1V3.1H1.6C.6 3.1 0 4 0 5C0 6 .6 6.9 1.6 6.9H2.5V5.7C2.5 4.8 3.2 4.1 4.1 4.1H6.4C7.1 4.1 7.6 3.6 7.6 2.9V1.5C7.6.6 6.6 0 5 0Z" transform="rotate(180 5 5)" fill="#3c3f41" stroke="#3c3f41" stroke-width="2.2"/><path d="M5 0C3.5 0 2.7.6 2.7 1.5V2.7H5.1V3.1H1.6C.6 3.1 0 4 0 5C0 6 .6 6.9 1.6 6.9H2.5V5.7C2.5 4.8 3.2 4.1 4.1 4.1H6.4C7.1 4.1 7.6 3.6 7.6 2.9V1.5C7.6.6 6.6 0 5 0Z" fill="#3e9bd6" stroke="#3e9bd6" stroke-width=".5"/><path d="M5 0C3.5 0 2.7.6 2.7 1.5V2.7H5.1V3.1H1.6C.6 3.1 0 4 0 5C0 6 .6 6.9 1.6 6.9H2.5V5.7C2.5 4.8 3.2 4.1 4.1 4.1H6.4C7.1 4.1 7.6 3.6 7.6 2.9V1.5C7.6.6 6.6 0 5 0Z" transform="rotate(180 5 5)" fill="#f5c518" stroke="#f5c518" stroke-width=".5"/></g></svg><span class="tabtx" style="left:675px">Django1231<span style="margin:0 .6px">\</span>urls.py</span>
<svg class="abs" style="left:794.5px;top:66px" width="8" height="8" viewBox="0 0 8 8" ><path d="M.5 .5L7.5 7.5M7.5 .5L.5 7.5" stroke="#6f7376" stroke-width="1" fill="none"/></svg><div class="tsep" style="left:428px"></div>
<div class="tsep" style="left:526px"></div>
<div class="tsep" style="left:647px"></div>
<div class="tsep" style="left:810px"></div>
<div class="abs" id="editor"></div>
<div class="abs" id="curline"></div>
<div class="abs" id="gutline"></div>
<span class="ln" style="top:85px">1</span>
<span class="ln" style="top:107px">2</span>
<span class="ln" style="top:129px">3</span>
<span class="ln" style="top:151px">4</span>
<span class="ln" style="top:173px">5</span>
<span class="ln" style="top:195px">6</span>
<span class="ln" style="top:217px">7</span>
<span class="ln" style="top:239px;color:#90908a">8</span>
<svg class="abs" style="left:385px;top:89px" width="12" height="14" viewBox="0 0 12 14" ><path d="M.5 .5H10.5V8.6L5.5 13L.5 8.6Z" fill="#272822" stroke="#585953" stroke-width="1"/><path d="M2.5 5.5H8.5" stroke="#585953" stroke-width="1"/></svg><svg class="abs" style="left:385px;top:133px" width="12" height="14" viewBox="0 0 12 14" ><path d="M.5 .5H10.5V8.6L5.5 13L.5 8.6Z" fill="#272822" stroke="#585953" stroke-width="1"/><path d="M2.5 5.5H8.5" stroke="#585953" stroke-width="1"/></svg><svg class="abs" style="left:385px;top:177px" width="12" height="14" viewBox="0 0 12 14" ><path d="M.5 .5H10.5V8.6L5.5 13L.5 8.6Z" fill="#272822" stroke="#585953" stroke-width="1"/><path d="M2.5 5.5H8.5" stroke="#585953" stroke-width="1"/></svg><svg class="abs" style="left:385px;top:240px" width="12" height="14" viewBox="0 0 12 14" ><path d="M.5 13.5H10.5V5L5.5 .8L.5 5Z" fill="#272822" stroke="#585953" stroke-width="1"/><path d="M2.5 8.5H8.5" stroke="#585953" stroke-width="1"/></svg><div class="abs" style="left:398px;top:236px;width:7px;height:22px;background:#595b5a;"></div>
<svg class="abs" style="left:398px;top:254px" width="7" height="3" viewBox="0 0 7 3" ><path d="M0 2.2L1.75 .6L3.5 2.2L5.25 .6L7 2.2" stroke="#8f908a" stroke-width=".9" fill="none"/></svg><span class="code" style="top:85px"><span class="kw">from</span><span style="color:#42433c">·</span>django.urls<span style="color:#42433c">·</span><span class="kw">import</span><span style="color:#42433c">·</span>path</span>
<span class="code" style="top:129px"><span class="kw">from</span><span style="color:#42433c">·</span>.<span style="color:#42433c">·</span><span class="kw">import</span><span style="color:#42433c">·</span>views</span>
<span class="code" style="top:173px">urlpatterns<span style="color:#42433c">·</span><span class="op">=</span>[</span>
<span class="code" style="top:195px"><span style="color:#42433c">····</span><span class="fn">path</span>(<span class="st">''</span><span class="cm">,</span>views.index<span class="cm">,</span><span class="pa">name</span><span class="op">=</span><span class="st">'index'</span>)<span class="cm">,</span></span>
<span class="code" style="top:238px">]</span>
<div class="redbox" style="left:388px;top:80px;width:330px;height:217px;border-radius:3px;"></div>
</body>
</html>
